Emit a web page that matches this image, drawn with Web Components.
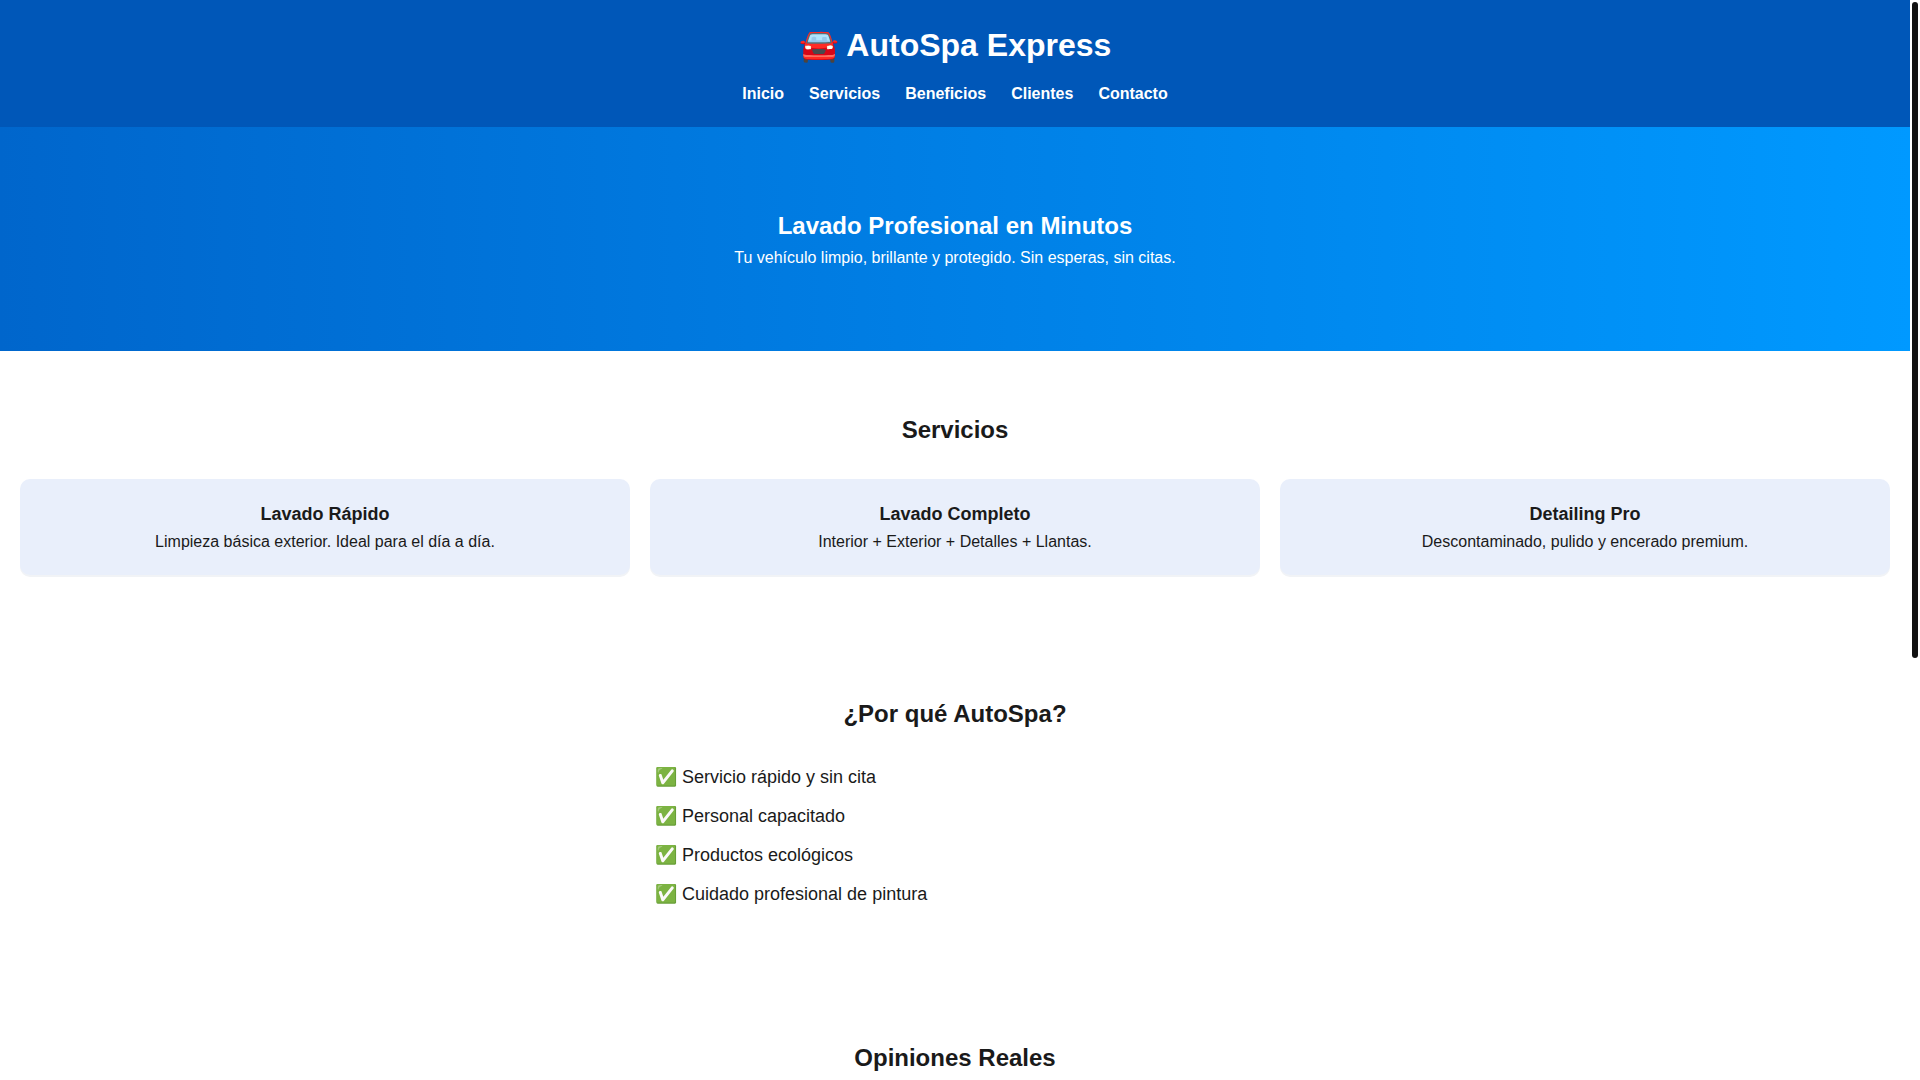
<!DOCTYPE html>
<html lang="es">
<head>
<meta charset="utf-8">
<title>AutoSpa Express</title>
<style>
  html, body { margin: 0; height: 100%; }
  body { background: #fff; color: #1a1a1a; font: 16px/26px "Liberation Sans", Arial, sans-serif; overflow: hidden; }
</style>
</head>
<body>
<page-shell>
  <site-header>
    <span slot="brand">🚘 AutoSpa Express</span>
    <nav-link href="#inicio">Inicio</nav-link>
    <nav-link href="#servicios">Servicios</nav-link>
    <nav-link href="#beneficios">Beneficios</nav-link>
    <nav-link href="#clientes">Clientes</nav-link>
    <nav-link href="#contacto">Contacto</nav-link>
  </site-header>
  <hero-banner id="inicio">
    <span slot="title">Lavado Profesional en Minutos</span>
    Tu vehículo limpio, brillante y protegido. Sin esperas, sin citas.
  </hero-banner>
  <page-section id="servicios">
    <span slot="title">Servicios</span>
    <card-grid>
      <service-card><span slot="title">Lavado Rápido</span>Limpieza básica exterior. Ideal para el día a día.</service-card>
      <service-card><span slot="title">Lavado Completo</span>Interior + Exterior + Detalles + Llantas.</service-card>
      <service-card><span slot="title">Detailing Pro</span>Descontaminado, pulido y encerado premium.</service-card>
    </card-grid>
  </page-section>
  <page-section id="beneficios">
    <span slot="title">¿Por qué AutoSpa?</span>
    <benefit-list>
      <benefit-item>✅ Servicio rápido y sin cita</benefit-item>
      <benefit-item>✅ Personal capacitado</benefit-item>
      <benefit-item>✅ Productos ecológicos</benefit-item>
      <benefit-item>✅ Cuidado profesional de pintura</benefit-item>
    </benefit-list>
  </page-section>
  <page-section id="clientes">
    <span slot="title">Opiniones Reales</span>
  </page-section>
</page-shell>
<script>
function define(name, markup, role) {
  const template = document.createElement('template');
  template.innerHTML = markup;
  customElements.define(name, class extends HTMLElement {
    constructor() {
      super();
      this.attachShadow({ mode: 'open' }).append(template.content.cloneNode(true));
    }
    connectedCallback() {
      if (role) this.setAttribute('role', role);
      const link = this.shadowRoot.querySelector('a');
      if (link) link.href = this.getAttribute('href');
    }
  });
}

define('page-shell', `
  <style>
    :host { display: flex; height: 100vh; }
    main { flex: 1; min-width: 0; overflow: hidden; }
  </style>
  <main><slot></slot></main>
  <scroll-track></scroll-track>`);

define('scroll-track', `
  <style>
    :host { display: block; width: 6px; padding: 2px; background: #fff; }
    div { height: 61%; border-radius: 3px; background: #111; }
  </style>
  <div></div>`);

define('site-header', `
  <style>
    :host { display: block; padding: 20px; background: #0057b8; color: #fff; text-align: center; }
    h1 { margin: 0 0 10px; font-size: 32px; line-height: 51px; }
    nav { display: flex; justify-content: center; gap: 25px; }
  </style>
  <header>
    <h1><slot name="brand"></slot></h1>
    <nav><slot></slot></nav>
  </header>`);

define('nav-link', `
  <style>
    :host { display: block; }
    a { color: inherit; font-weight: bold; text-decoration: none; }
  </style>
  <a><slot></slot></a>`);

define('hero-banner', `
  <style>
    :host { display: block; padding: 80px 20px; background: linear-gradient(90deg, #0066cc, #0099ff); color: #fff; text-align: center; }
    h2 { margin: 0; font-size: 24px; line-height: 38px; }
    p { margin: 0; }
  </style>
  <h2><slot name="title"></slot></h2>
  <p><slot></slot></p>`);

define('page-section', `
  <style>
    :host { display: block; padding: 60px 20px; }
    h2 { margin: 0 0 30px; font-size: 24px; line-height: 38px; text-align: center; }
  </style>
  <section>
    <h2><slot name="title"></slot></h2>
    <slot></slot>
  </section>`);

define('card-grid', `
  <style>
    :host { display: grid; grid-template-columns: repeat(auto-fit, minmax(250px, 1fr)); gap: 20px; }
  </style>
  <slot></slot>`);

define('service-card', `
  <style>
    :host { display: block; padding: 20px; border-radius: 10px; background: #e9effb; box-shadow: 0 2px 0 #f1f3f6; text-align: center; }
    h3 { margin: 0; font-size: 18px; line-height: 30px; }
    p { margin: 0; }
  </style>
  <h3><slot name="title"></slot></h3>
  <p><slot></slot></p>`);

define('benefit-list', `
  <style>
    :host { display: block; max-width: 600px; margin: 0 auto; }
  </style>
  <slot></slot>`, 'list');

define('benefit-item', `
  <style>
    :host { display: block; margin-bottom: 10px; font-size: 18px; line-height: 29px; }
  </style>
  <slot></slot>`, 'listitem');
</script>
</body>
</html>
